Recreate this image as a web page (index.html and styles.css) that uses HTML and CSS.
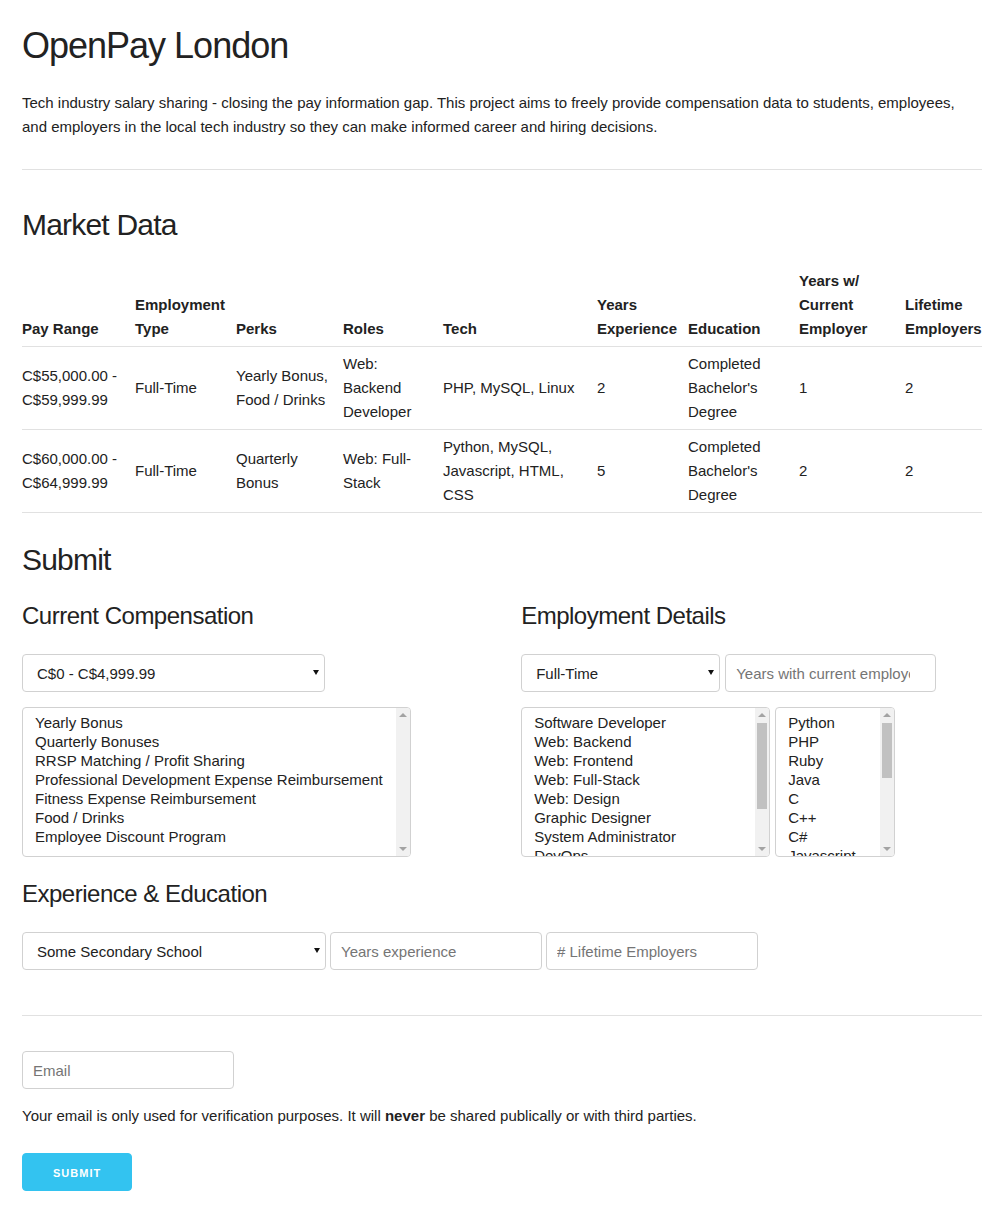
FILE: index.html
```html
<!DOCTYPE html>
<html lang="en">
<head>
<meta charset="utf-8">
<title>OpenPay London</title>
<link rel="stylesheet" href="styles.css">
</head>
<body>
<div class="container">
  <h1 class="title">OpenPay London</h1>
  <p class="intro">Tech industry salary sharing - closing the pay information gap. This project aims to freely provide compensation data to students, employees, and employers in the local tech industry so they can make informed career and hiring decisions.</p>
  <hr class="rule">

  <h3 class="section-title">Market Data</h3>
  <table class="data">
    <colgroup>
      <col class="c-pay"><col class="c-type"><col class="c-perks"><col class="c-roles"><col class="c-tech"><col class="c-exp"><col class="c-edu"><col class="c-cur"><col class="c-life">
    </colgroup>
    <thead>
      <tr>
        <th>Pay Range</th>
        <th>Employment Type</th>
        <th>Perks</th>
        <th>Roles</th>
        <th>Tech</th>
        <th>Years Experience</th>
        <th>Education</th>
        <th>Years w/ Current Employer</th>
        <th>Lifetime Employers</th>
      </tr>
    </thead>
    <tbody>
      <tr>
        <td>C$55,000.00 - C$59,999.99</td>
        <td>Full-Time</td>
        <td>Yearly Bonus, Food / Drinks</td>
        <td>Web: Backend Developer</td>
        <td>PHP, MySQL, Linux</td>
        <td>2</td>
        <td>Completed Bachelor's Degree</td>
        <td>1</td>
        <td>2</td>
      </tr>
      <tr>
        <td>C$60,000.00 - C$64,999.99</td>
        <td>Full-Time</td>
        <td>Quarterly Bonus</td>
        <td>Web: Full-Stack</td>
        <td>Python, MySQL, Javascript, HTML, CSS</td>
        <td>5</td>
        <td>Completed Bachelor's Degree</td>
        <td>2</td>
        <td>2</td>
      </tr>
    </tbody>
  </table>

  <h3 class="section-title submit-title">Submit</h3>
  <div class="form-row">
    <div class="form-col">
      <h4 class="sub-title">Current Compensation</h4>
      <div class="controls">
        <div class="select-wrap">
          <select class="field dropdown pay-select">
            <option>C$0 - C$4,999.99</option>
            <option>C$5,000.00 - C$9,999.99</option>
            <option>C$10,000.00 - C$14,999.99</option>
            <option>C$55,000.00 - C$59,999.99</option>
            <option>C$60,000.00 - C$64,999.99</option>
            <option>C$200,000.00 - C$204,999.99</option>
          </select>
        </div>
      </div>
      <div class="controls list-controls">
        <div class="listbox-wrap">
          <select class="listbox perks-list" multiple>
            <option>Yearly Bonus</option>
            <option>Quarterly Bonuses</option>
            <option>RRSP Matching / Profit Sharing</option>
            <option>Professional Development Expense Reimbursement</option>
            <option>Fitness Expense Reimbursement</option>
            <option>Food / Drinks</option>
            <option>Employee Discount Program</option>
          </select>
          <div class="scrollbar" aria-hidden="true">
            <span class="sb-btn sb-up"></span>
            <span class="sb-track"></span>
            <span class="sb-btn sb-down"></span>
          </div>
        </div>
      </div>
    </div>
    <div class="form-col">
      <h4 class="sub-title">Employment Details</h4>
      <div class="controls gap5">
        <div class="select-wrap">
          <select class="field dropdown type-select">
            <option>Full-Time</option>
            <option>Part-Time</option>
            <option>Contract</option>
            <option>Internship</option>
          </select>
        </div>
        <input class="field num-input years-current" type="text" inputmode="numeric" placeholder="Years with current employer">
      </div>
      <div class="controls list-controls gap5">
        <div class="listbox-wrap">
          <select class="listbox roles-list" multiple>
            <option>Software Developer</option>
            <option>Web: Backend</option>
            <option>Web: Frontend</option>
            <option>Web: Full-Stack</option>
            <option>Web: Design</option>
            <option>Graphic Designer</option>
            <option>System Administrator</option>
            <option>DevOps</option>
            <option>QA / Testing</option>
            <option>Data Scientist</option>
            <option>Mobile Developer</option>
          </select>
          <div class="scrollbar" aria-hidden="true">
            <span class="sb-btn sb-up"></span>
            <span class="sb-track"><span class="sb-thumb roles-thumb"></span></span>
            <span class="sb-btn sb-down"></span>
          </div>
        </div>
        <div class="listbox-wrap">
          <select class="listbox tech-list" multiple>
            <option>Python</option>
            <option>PHP</option>
            <option>Ruby</option>
            <option>Java</option>
            <option>C</option>
            <option>C++</option>
            <option>C#</option>
            <option>Javascript</option>
            <option>HTML</option>
            <option>CSS</option>
            <option>MySQL</option>
            <option>PostgreSQL</option>
            <option>Linux</option>
            <option>Objective-C</option>
            <option>Swift</option>
            <option>Go</option>
          </select>
          <div class="scrollbar" aria-hidden="true">
            <span class="sb-btn sb-up"></span>
            <span class="sb-track"><span class="sb-thumb tech-thumb"></span></span>
            <span class="sb-btn sb-down"></span>
          </div>
        </div>
      </div>
    </div>
  </div>

  <h4 class="sub-title">Experience &amp; Education</h4>
  <div class="controls gap4 last-controls">
    <div class="select-wrap">
      <select class="field dropdown edu-select">
        <option>Some Secondary School</option>
        <option>Completed Secondary School</option>
        <option>Some College / University</option>
        <option>Completed Bachelor's Degree</option>
        <option>Completed Master's Degree</option>
      </select>
    </div>
    <input class="field num-input small-input" type="text" inputmode="numeric" placeholder="Years experience">
    <input class="field num-input small-input" type="text" inputmode="numeric" placeholder="# Lifetime Employers">
  </div>

  <hr class="rule">

  <div class="controls">
    <input class="field small-input" type="email" placeholder="Email">
  </div>
  <p class="note">Your email is only used for verification purposes. It will <strong>never</strong> be shared publically or with third parties.</p>
  <button class="button-primary" type="button">Submit</button>
</div>
</body>
</html>
```

FILE: styles.css
```css
html {
  font-size: 62.5%;
}

body {
  margin: 0;
  font-family: "Liberation Sans", Arial, Helvetica, sans-serif;
  font-size: 15px;
  line-height: 1.6;
  color: #222;
  background: #fff;
}

.container {
  width: 960px;
  margin-left: 22px;
  padding-top: 24px;
  padding-bottom: 33px;
}

.title,
.section-title,
.sub-title {
  margin: 0 0 20px;
  font-weight: normal;
}

.title {
  font-size: 36px;
  line-height: 1.2;
  letter-spacing: -1px;
  margin-bottom: 24px;
}

.section-title {
  font-size: 30px;
  line-height: 1.3;
  letter-spacing: -0.8px;
}

.submit-title {
  margin-bottom: 21px;
}

.sub-title {
  font-size: 24px;
  line-height: 32px;
  letter-spacing: -0.5px;
  margin-bottom: 22px;
}

.intro {
  margin: 0 0 25px;
}

.rule {
  border: 0;
  border-top: 1px solid #E1E1E1;
  margin: 30px 0 35px;
  height: 0;
}

/* Table */
.data {
  width: 960px;
  border-collapse: collapse;
  table-layout: fixed;
  margin-bottom: 27px;
}

.c-pay { width: 113px; }
.c-type { width: 101px; }
.c-perks { width: 107px; }
.c-roles { width: 100px; }
.c-tech { width: 154px; }
.c-exp { width: 91px; }
.c-edu { width: 111px; }
.c-cur { width: 106px; }
.c-life { width: 77px; }

.data th,
.data td {
  padding: 5px 8px 5px 0;
  text-align: left;
  border-bottom: 1px solid #E1E1E1;
  line-height: 24px;
}

.data th:last-child,
.data td:last-child {
  padding-right: 0;
}

.data th {
  vertical-align: bottom;
  font-weight: bold;
}

.data td {
  vertical-align: middle;
}

/* Form */
.form-row {
  display: grid;
  grid-template-columns: 48% 48%;
  column-gap: 4%;
}

.controls {
  display: flex;
  align-items: flex-start;
  margin-bottom: 15px;
}

.list-controls {
  margin-bottom: 21px;
}

.gap5 { gap: 5px; }
.gap4 { gap: 4px; }

.last-controls {
  margin-bottom: 45px;
}

.field,
.listbox {
  font: inherit;
  color: #222;
  background-color: #fff;
  border: 1px solid #D1D1D1;
  border-radius: 4px;
  box-sizing: border-box;
  margin: 0;
  box-shadow: none;
}

.field {
  height: 38px;
  padding: 6px 10px;
}

.field::placeholder {
  color: #757575;
}

.num-input {
  padding-right: 25px;
}

.select-wrap {
  position: relative;
  display: block;
}

.select-wrap::after {
  content: "";
  position: absolute;
  right: 6px;
  top: 16px;
  width: 0;
  height: 0;
  border-left: 3px solid transparent;
  border-right: 3px solid transparent;
  border-top: 5px solid #111;
  pointer-events: none;
}

.dropdown {
  display: block;
  -webkit-appearance: none;
  appearance: none;
  padding: 7px 20px 5px 14px;
}

/* Listboxes with a drawn scrollbar */
.listbox-wrap {
  position: relative;
  display: block;
}

.listbox {
  display: block;
  height: 150px;
  padding: 6px 24px 6px 10px;
  line-height: 19px;
  overflow: hidden;
}

.listbox option {
  line-height: 18px;
  padding: 0 2px 1px;
}

.scrollbar {
  position: absolute;
  top: 1px;
  right: 1px;
  bottom: 1px;
  width: 14px;
  display: flex;
  flex-direction: column;
  background-color: #f1f1f1;
  border-radius: 0 3px 3px 0;
  pointer-events: none;
}

.sb-btn {
  position: relative;
  display: block;
  height: 15px;
  flex: none;
}

.sb-btn::after {
  content: "";
  position: absolute;
  left: 3px;
  width: 0;
  height: 0;
  border-left: 4px solid transparent;
  border-right: 4px solid transparent;
}

.sb-up::after {
  top: 5px;
  border-bottom: 4px solid #a3a3a3;
}

.sb-down::after {
  top: 6px;
  border-top: 4px solid #a3a3a3;
}

.sb-track {
  display: block;
  flex: 1;
}

.sb-thumb {
  display: block;
  margin: 0 2px;
  background-color: #c1c1c1;
}

.roles-thumb { height: 86px; }
.tech-thumb { height: 55px; }

.pay-select { width: 303px; }
.type-select { width: 199px; }
.years-current { width: 211px; }
.edu-select { width: 304px; }
.small-input { width: 212px; }

.perks-list { width: 389px; }
.roles-list { width: 249px; }
.tech-list { width: 120px; }

.note {
  margin: 0 0 25px;
}

.note strong {
  font-weight: bold;
}

.button-primary {
  display: block;
  height: 38px;
  padding: 2px 30px 0;
  background-color: #33C3F0;
  border: 1px solid #33C3F0;
  border-radius: 4px;
  color: #fff;
  font-family: inherit;
  font-size: 11px;
  font-weight: bold;
  letter-spacing: 1px;
  text-transform: uppercase;
  line-height: 34px;
  cursor: pointer;
  box-sizing: border-box;
}
```
